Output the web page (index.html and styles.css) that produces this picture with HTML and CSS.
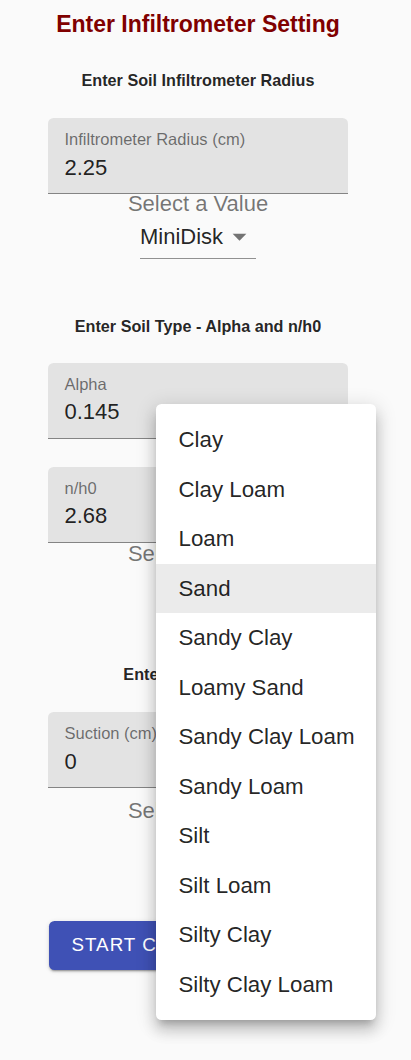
FILE: index.html
```html
<!DOCTYPE html>
<html lang="en">
<head>
<meta charset="utf-8">
<title>Enter Infiltrometer Setting</title>
<link rel="stylesheet" href="styles.css">
</head>
<body>
<main class="page">
  <h1 class="title">Enter Infiltrometer Setting</h1>

  <section class="section section-radius">
    <h2 class="heading">Enter Soil Infiltrometer Radius</h2>
    <div class="field">
      <label class="field-label">Infiltrometer Radius (cm)</label>
      <div class="field-value">2.25</div>
    </div>
    <div class="select-label">Select a Value</div>
    <div class="select">
      <span class="select-text">MiniDisk</span>
      <svg class="select-icon" viewBox="0 0 24 24" width="33" height="33"><path d="M7 10l5 5 5-5z"/></svg>
    </div>
  </section>

  <section class="section section-soil">
    <h2 class="heading">Enter Soil Type - Alpha and n/h0</h2>
    <div class="field">
      <label class="field-label">Alpha</label>
      <div class="field-value">0.145</div>
    </div>
    <div class="field field-next">
      <label class="field-label">n/h0</label>
      <div class="field-value">2.68</div>
    </div>
    <div class="select-label select-label-soil">Select a Value</div>
    <div class="select">
      <span class="select-text">Sand</span>
      <svg class="select-icon" viewBox="0 0 24 24" width="33" height="33"><path d="M7 10l5 5 5-5z"/></svg>
    </div>
  </section>

  <section class="section section-suction">
    <h2 class="heading">Enter Suction Head</h2>
    <div class="field">
      <label class="field-label">Suction (cm)</label>
      <div class="field-value">0</div>
    </div>
    <div class="select-label select-label-gap">Select a Value</div>
    <div class="select">
      <span class="select-text">0 cm</span>
      <svg class="select-icon" viewBox="0 0 24 24" width="33" height="33"><path d="M7 10l5 5 5-5z"/></svg>
    </div>
  </section>

  <div class="actions">
    <button class="btn" type="button">START CALCULATION</button>
  </div>
</main>

<ul class="menu" role="listbox">
  <li class="menu-item">Clay</li>
  <li class="menu-item">Clay Loam</li>
  <li class="menu-item">Loam</li>
  <li class="menu-item is-selected">Sand</li>
  <li class="menu-item">Sandy Clay</li>
  <li class="menu-item">Loamy Sand</li>
  <li class="menu-item">Sandy Clay Loam</li>
  <li class="menu-item">Sandy Loam</li>
  <li class="menu-item">Silt</li>
  <li class="menu-item">Silt Loam</li>
  <li class="menu-item">Silty Clay</li>
  <li class="menu-item">Silty Clay Loam</li>
</ul>
</body>
</html>
```

FILE: styles.css
```css
* { box-sizing: border-box; }

html, body {
  margin: 0;
  padding: 0;
  background: #fafafa;
  font-family: "Liberation Sans", Arial, sans-serif;
  color: rgba(0, 0, 0, 0.87);
}

body {
  position: relative;
  min-height: 1060px;
  overflow: hidden;
}

.page {
  width: 396px;
  padding-top: 10px;
  display: flex;
  flex-direction: column;
  align-items: center;
}

.title {
  margin: 0;
  font-size: 23px;
  line-height: 28px;
  font-weight: bold;
  color: #800000;
  text-align: center;
}

.section {
  width: 100%;
  display: flex;
  flex-direction: column;
  align-items: center;
}

.heading {
  margin: 0;
  font-size: 16.2px;
  line-height: 20px;
  font-weight: bold;
  color: rgba(0, 0, 0, 0.87);
  text-align: center;
}

.section-radius { margin-top: 31.5px; }
.section-radius .heading { margin-bottom: 28.5px; }

.section-soil { margin-top: 57.5px; }
.section-soil .heading { margin-bottom: 26.5px; }

.section-suction { margin-top: 55px; }
.section-suction .heading { margin-bottom: 28.5px; }

.field {
  width: 300px;
  height: 76px;
  padding: 13px 16.5px 0;
  background: rgba(0, 0, 0, 0.09);
  border-radius: 5.5px 5.5px 0 0;
  border-bottom: 1px solid rgba(0, 0, 0, 0.42);
  display: flex;
  flex-direction: column;
  align-items: flex-start;
}

.field-next { margin-top: 28px; }

.field-label {
  font-size: 16.5px;
  line-height: 16.5px;
  color: rgba(0, 0, 0, 0.54);
}

.field-value {
  margin-top: 7px;
  font-size: 22px;
  line-height: 26px;
  color: rgba(0, 0, 0, 0.87);
}

.select-label {
  font-size: 22px;
  line-height: 20px;
  color: rgba(0, 0, 0, 0.54);
  text-align: center;
}

.select-label-soil { margin-top: 1.5px; }
.select-label-gap { margin-top: 13px; }

.select {
  margin-top: 1.6px;
  position: relative;
  padding: 8px 33px 8px 0;
  border-bottom: 1px solid rgba(0, 0, 0, 0.42);
  display: flex;
  align-items: center;
}

.select-text {
  font-size: 22px;
  line-height: 26px;
  color: rgba(0, 0, 0, 0.87);
}

.select-icon {
  position: absolute;
  right: 0;
  top: 50%;
  margin-top: -16.5px;
  fill: rgba(0, 0, 0, 0.54);
}

.actions {
  width: 100%;
  margin-top: 55px;
  padding-left: 49px;
  display: flex;
}

.btn {
  font-family: "Liberation Sans", Arial, sans-serif;
  font-size: 18.8px;
  line-height: 32.5px;
  letter-spacing: 1px;
  font-weight: normal;
  color: #fff;
  background: #3f51b5;
  border: 0;
  border-radius: 5.5px;
  padding: 8.25px 22.5px;
  box-shadow: 0 3px 1px -2px rgba(0,0,0,0.2), 0 2px 2px 0 rgba(0,0,0,0.14), 0 1px 5px 0 rgba(0,0,0,0.12);
}

.menu {
  position: absolute;
  left: 156px;
  top: 404px;
  width: 220px;
  margin: 0;
  padding: 11px 0;
  list-style: none;
  background: #fff;
  border-radius: 5.5px;
  box-shadow: 0 7px 7px -4px rgba(0,0,0,0.2), 0 11px 14px 1px rgba(0,0,0,0.14), 0 4px 19px 3px rgba(0,0,0,0.12);
}

.menu-item {
  height: 49.5px;
  padding: 8.25px 22.5px;
  font-size: 22.3px;
  line-height: 33px;
  color: rgba(0, 0, 0, 0.87);
  white-space: nowrap;
}

.menu-item.is-selected {
  background: rgba(0, 0, 0, 0.08);
}
```
